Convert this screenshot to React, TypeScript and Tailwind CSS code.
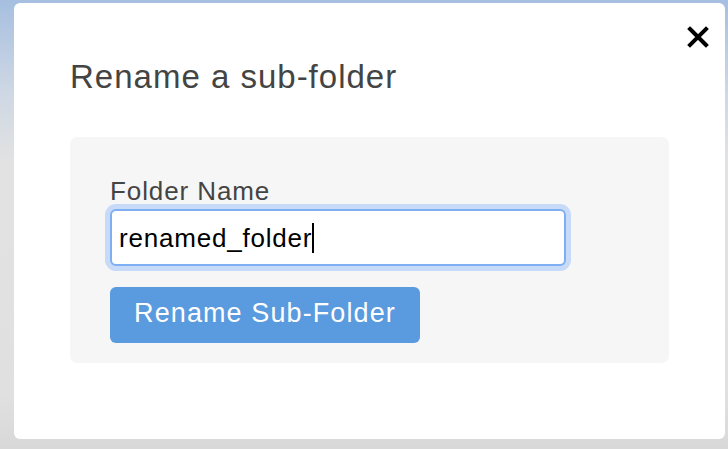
import React from "react";

export default function App() {
  return (
    <div className="w-[728px] h-[449px] overflow-hidden bg-[linear-gradient(180deg,#a6bfe0_0%,#cdd7e4_20%,#e2e2e2_36%,#e0e0e0_88%,#d8d8d8_100%)] pl-[14px] pt-[3px] font-['Liberation_Sans',Arial,sans-serif]">
      <div className="relative w-[711px] h-[436px] bg-white rounded-[6px] px-[56px] pt-[55px]">
        <button
          aria-label="Close"
          className="absolute right-[15px] top-[22px] w-[24px] h-[24px] flex items-center justify-center"
        >
          <svg width="22" height="22" viewBox="0 0 22 22">
            <path d="M3 3 L19 19 M19 3 L3 19" stroke="#000" strokeWidth="4" strokeLinecap="square" />
          </svg>
        </button>
        <h1 className="text-[33px] leading-[38px] tracking-[1px] text-[#444444] font-normal">
          Rename a sub-folder
        </h1>
        <div className="mt-[41px] w-[599px] bg-[#f6f6f6] rounded-[7px] pl-[40px] pt-[39px] pb-[20px]">
          <label className="block text-[26px] leading-[30px] tracking-[0.9px] text-[#444444]">
            Folder Name
          </label>
          <div className="mt-[3px] w-[456px] h-[57px] bg-white border-2 border-[#7eaff2] rounded-[6px] shadow-[0_0_0_5px_#c7daf7] flex items-center pl-[7px]">
            <span className="text-[26px] leading-[30px] tracking-[0.8px] text-black">renamed_folder</span>
            <span className="w-[2px] h-[30px] bg-black"></span>
          </div>
          <button className="mt-[21px] w-[310px] h-[56px] bg-[#5a9ade] rounded-[6px] text-white text-[27px] leading-[30px] tracking-[1.1px] pb-[5px]">
            Rename Sub-Folder
          </button>
        </div>
      </div>
    </div>
  );
}
